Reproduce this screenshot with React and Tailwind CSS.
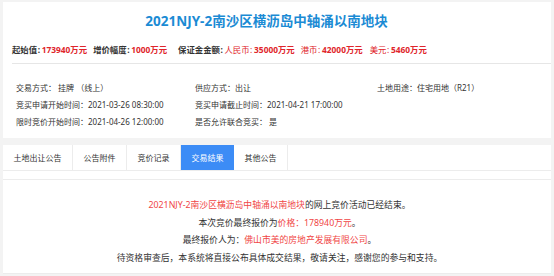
const tabs = ["土地出让公告", "公告附件", "竞价记录", "交易结果", "其他公告"];

const InfoCell = ({ label, value, className = "" }) => (
  <div className={`whitespace-nowrap ${className}`}>
    {label}
    {value}
  </div>
);

// 价格行里的冒号比较窄
const Colon = () => <span className="inline-block w-[4.5px] pl-[0.5px]">:</span>;

export default function App() {
  return (
    <div
      className="w-[554px] h-[276px] overflow-hidden bg-[#f3f3f3] pt-[2px] px-[3px] text-[#333]"
      style={{ fontFamily: '"Noto Sans", "Noto Sans CJK SC", sans-serif' }}
    >
      {/* 顶部信息 */}
      <div className="bg-white h-[136px]">
        <h1 className="pt-[9px] pr-[21px] h-[36px] text-center text-[13.5px] font-bold leading-[20px] text-[#1b8bd4]">
          2021NJY-2南沙区横沥岛中轴涌以南地块
        </h1>

        <div className="ml-[9px] border-b border-[#e6e6e6] h-[26px] flex items-center gap-[6px] text-[8.4px] font-bold whitespace-nowrap">
          <span>
            起始值<Colon />
            <span className="text-[#e0252b]">173940万元</span>
          </span>
          <span>
            增价幅度<Colon />
            <span className="text-[#e0252b]">1000万元</span>
          </span>
          <span className="ml-[5px]">
            保证金金额<Colon />
            <span className="text-[#e0252b] font-normal">
              人民币<Colon />
            </span>
            <span className="text-[#e0252b]">35000万元</span>
          </span>
          <span className="text-[#e0252b]">
            <span className="font-normal">
              港币<Colon />
            </span>
            42000万元
          </span>
          <span className="text-[#e0252b] ml-[1px]">
            <span className="font-normal">
              美元<Colon />
            </span>
            5460万元
          </span>
        </div>

        <div className="pl-[13px] pt-[15px] text-[8px] leading-[17px] text-[#333]">
          <div className="flex">
            <InfoCell className="w-[179px]" label="交易方式：" value=" 挂牌 （线上）" />
            <InfoCell className="w-[182px]" label="供应方式：" value="出让" />
            <InfoCell label="土地用途：" value="住宅用地（R21）" />
          </div>
          <div className="flex">
            <InfoCell className="w-[179px]" label="竞买申请开始时间：" value="2021-03-26 08:30:00" />
            <InfoCell label="竞买申请截止时间：" value="2021-04-21 17:00:00" />
          </div>
          <div className="flex">
            <InfoCell className="w-[179px]" label="限时竞价开始时间：" value="2021-04-26 12:00:00" />
            <InfoCell label="是否允许联合竞买：" value=" 是" />
          </div>
        </div>
      </div>

      {/* 标签页 */}
      <div className="mt-[7px] bg-white">
        <div className="flex h-[26px] border-b border-[#ececec]">
          {tabs.map((t, i) => (
            <div
              key={t}
              className={
                i === 3
                  ? "flex items-center px-[10.5px] text-[8px] bg-[#3c8cf6] text-white"
                  : "flex items-center px-[10.5px] text-[8px] text-[#333] border-r border-[#ececec]"
              }
            >
              {t}
            </div>
          ))}
        </div>

        <div className="mt-[8px] border-t border-[#ececec] pt-[17px] pb-[6px] pl-[5px] border-b text-center text-[8.8px] leading-[17.5px] text-[#333]">
          <p>
            <span className="text-[#f04545]">2021NJY-2南沙区横沥岛中轴涌以南地块</span>
            的网上竞价活动已经结束。
          </p>
          <p>
            本次竞价最终报价为<span className="text-[#f04545]">价格：178940万元</span>。
          </p>
          <p>
            最终报价人为：<span className="text-[#f04545]">佛山市美的房地产发展有限公司</span>。
          </p>
          <p>待资格审查后，本系统将直接公布具体成交结果，敬请关注，感谢您的参与和支持。</p>
        </div>
      </div>
    </div>
  );
}
